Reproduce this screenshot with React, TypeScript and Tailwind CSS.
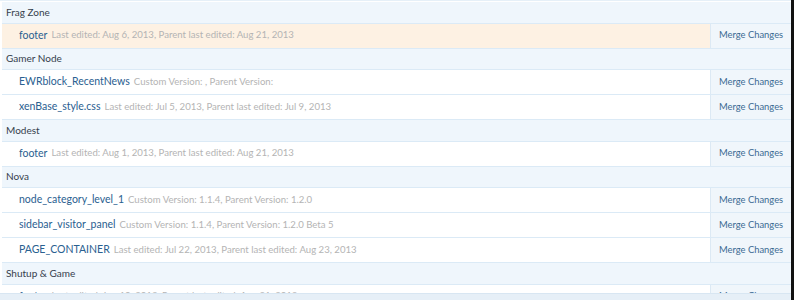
import React from "react";

type Item = { title: string; meta: string; highlight?: boolean };
type Group = { name: string; items: Item[] };

const groups: Group[] = [
  {
    name: "Frag Zone",
    items: [
      { title: "footer", meta: "Last edited: Aug 6, 2013, Parent last edited: Aug 21, 2013", highlight: true },
    ],
  },
  {
    name: "Gamer Node",
    items: [
      { title: "EWRblock_RecentNews", meta: "Custom Version: , Parent Version:" },
      { title: "xenBase_style.css", meta: "Last edited: Jul 5, 2013, Parent last edited: Jul 9, 2013" },
    ],
  },
  {
    name: "Modest",
    items: [{ title: "footer", meta: "Last edited: Aug 1, 2013, Parent last edited: Aug 21, 2013" }],
  },
  {
    name: "Nova",
    items: [
      { title: "node_category_level_1", meta: "Custom Version: 1.1.4, Parent Version: 1.2.0" },
      { title: "sidebar_visitor_panel", meta: "Custom Version: 1.1.4, Parent Version: 1.2.0 Beta 5" },
      { title: "PAGE_CONTAINER", meta: "Last edited: Jul 22, 2013, Parent last edited: Aug 23, 2013" },
    ],
  },
  {
    name: "Shutup & Game",
    items: [{ title: "footer", meta: "Last edited: Jun 10, 2013, Parent last edited: Aug 21, 2013" }],
  },
];

export default function App() {
  return (
    <div
      className="relative w-[794px] h-[300px] overflow-hidden bg-white flex"
      style={{ fontFamily: "Lato, 'Liberation Sans', sans-serif" }}
    >
      <div className="flex-1 pt-[1px] pl-[2px] border-t border-[#e6f0f8]">
        {groups.map((g) => (
          <div key={g.name}>
            <div className="h-[21.5px] flex items-center pl-[4px] bg-[#eff6fc] border-b border-[#dbeaf6] text-[10px] text-[#35404c]">
              {g.name}
            </div>
            {g.items.map((it, i) => (
              <div
                key={i}
                className={
                  it.highlight
                    ? "h-[25px] flex border-b border-[#dbeaf6] bg-[#fdf1e3]"
                    : "h-[25px] flex border-b border-[#dbeaf6] bg-white"
                }
              >
                <div className="flex-1 flex items-center pl-[17px] whitespace-nowrap overflow-hidden">
                  <span className="text-[10.5px] text-[#2a6090]">{it.title}</span>
                  <span className="ml-[4px] text-[9.6px] text-[#b4b4b4]">{it.meta}</span>
                </div>
                <div className="w-[81px] flex items-center pl-[8px] bg-[#f0f6fb] border-l border-[#dce9f4] text-[9.4px] text-[#3b6b93] whitespace-nowrap">
                  Merge Changes
                </div>
              </div>
            ))}
          </div>
        ))}
      </div>
      <div className="w-[3px] bg-[#111111]" />
      <div className="absolute left-0 bottom-0 right-[3px] h-[7px] bg-[#e6eff7] border-t border-[#d8e6f2]" />
    </div>
  );
}
